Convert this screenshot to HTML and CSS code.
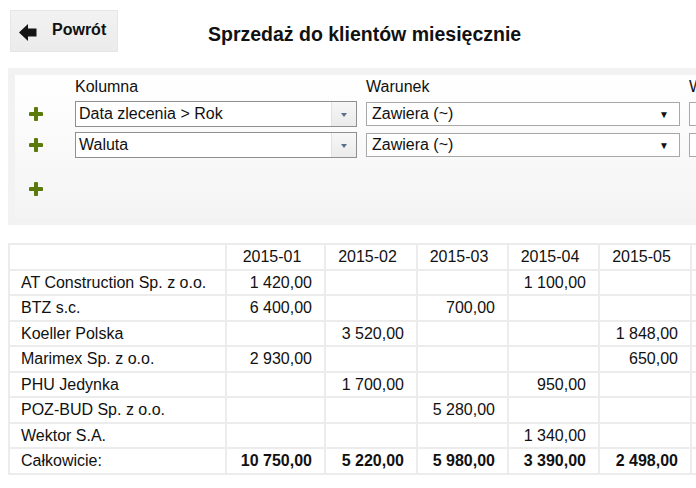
FILE: index.html
```html
<!DOCTYPE html>
<html lang="pl">
<head>
<meta charset="utf-8">
<title>Sprzedaż do klientów miesięcznie</title>
<link rel="stylesheet" href="styles.css">
</head>
<body>
<header class="top">
  <button class="back">
    <svg class="back-icon" width="18" height="17" viewBox="0 0 18 17"><polygon points="0,8.5 9,0 9,4.5 17.5,4.5 17.5,12.5 9,12.5 9,17" fill="#141414"/></svg>
    <span>Powrót</span>
  </button>
  <h1 class="title">Sprzedaż do klientów miesięcznie</h1>
</header>

<section class="panel">
  <div class="filters">
    <div class="plus-cell"></div>
    <div class="label">Kolumna</div>
    <div class="label">Warunek</div>
    <div class="label">Wartość</div>

    <div class="plus-cell"><svg class="plus" width="14" height="14" viewBox="0 0 14 14"><path d="M7 1.5v11M1.5 7h11" stroke="#5b7a0c" stroke-width="4" stroke-linecap="round"/></svg></div>
    <div class="combo"><span class="combo-text">Data zlecenia &gt; Rok</span><span class="combo-btn"><span class="tri"></span></span></div>
    <div class="select"><span>Zawiera (~)</span><span class="arrow">▼</span></div>
    <div class="input"></div>

    <div class="plus-cell"><svg class="plus" width="14" height="14" viewBox="0 0 14 14"><path d="M7 1.5v11M1.5 7h11" stroke="#5b7a0c" stroke-width="4" stroke-linecap="round"/></svg></div>
    <div class="combo"><span class="combo-text">Waluta</span><span class="combo-btn"><span class="tri"></span></span></div>
    <div class="select"><span>Zawiera (~)</span><span class="arrow">▼</span></div>
    <div class="input"></div>

    <div class="plus-cell"><svg class="plus" width="14" height="14" viewBox="0 0 14 14"><path d="M7 1.5v11M1.5 7h11" stroke="#5b7a0c" stroke-width="4" stroke-linecap="round"/></svg></div>
  </div>
</section>

<table class="report">
  <colgroup>
    <col class="c-name"><col class="c1"><col class="c2"><col class="c3"><col class="c4"><col class="c5"><col class="c6">
  </colgroup>
  <thead>
    <tr><th></th><th>2015-01</th><th>2015-02</th><th>2015-03</th><th>2015-04</th><th>2015-05</th><th>2015-06</th></tr>
  </thead>
  <tbody>
    <tr><td>AT Construction Sp. z o.o.</td><td>1 420,00</td><td></td><td></td><td>1 100,00</td><td></td><td></td></tr>
    <tr><td>BTZ s.c.</td><td>6 400,00</td><td></td><td>700,00</td><td></td><td></td><td></td></tr>
    <tr><td>Koeller Polska</td><td></td><td>3 520,00</td><td></td><td></td><td>1 848,00</td><td></td></tr>
    <tr><td>Marimex Sp. z o.o.</td><td>2 930,00</td><td></td><td></td><td></td><td>650,00</td><td></td></tr>
    <tr><td>PHU Jedynka</td><td></td><td>1 700,00</td><td></td><td>950,00</td><td></td><td></td></tr>
    <tr><td>POZ-BUD Sp. z o.o.</td><td></td><td></td><td>5 280,00</td><td></td><td></td><td></td></tr>
    <tr><td>Wektor S.A.</td><td></td><td></td><td></td><td>1 340,00</td><td></td><td></td></tr>
    <tr class="total"><td>Całkowicie:</td><td>10 750,00</td><td>5 220,00</td><td>5 980,00</td><td>3 390,00</td><td>2 498,00</td><td></td></tr>
  </tbody>
</table>
</body>
</html>
```

FILE: styles.css
```css
html {
  overflow: hidden;
}
body {
  margin: 0;
  width: 900px;
  font-family: "Liberation Sans", Arial, sans-serif;
  font-size: 16px;
  color: #111;
  background: #fff;
}

.top {
  display: flex;
  align-items: center;
  padding: 10px 0 0 10px;
  height: 42px;
}
.back {
  display: flex;
  align-items: center;
  width: 108px;
  height: 42px;
  padding: 0 0 0 8px;
  margin: 0;
  border: 1px solid #e6e6e6;
  background: linear-gradient(#f2f2f2, #ebebeb);
  font-family: "Liberation Sans", Arial, sans-serif;
  font-weight: bold;
  font-size: 16px;
  color: #111;
  cursor: pointer;
}
.back-icon {
  margin-right: 15px;
  position: relative;
  top: 1px;
}
.back span {
  position: relative;
  top: -1px;
}
.title {
  margin: 0 0 0 90px;
  font-size: 19.5px;
  font-weight: bold;
  color: #111;
  position: relative;
  top: 3px;
}

.panel {
  margin: 16px 0 0 8px;
  border: 7px solid #f2f2f2;
  background: linear-gradient(#ffffff, #f4f4f4);
  height: 143px;
}
.filters {
  display: grid;
  grid-template-columns: 51px 282px 314px 200px;
  grid-template-rows: 21px 26px 26px 52px;
  column-gap: 9px;
  row-gap: 5px;
}
.plus-cell {
  display: flex;
  align-items: center;
  justify-content: flex-start;
  padding-left: 14px;
}
.plus {
  display: block;
}
.label {
  line-height: 20px;
  padding-top: 2px;
}

.combo {
  display: flex;
  border: 1px solid #8f8f8f;
  background: #fff;
  height: 26px;
  box-sizing: border-box;
}
.combo-text {
  flex: 1;
  line-height: 24px;
  padding-left: 3px;
}
.combo-btn {
  width: 24px;
  background: linear-gradient(#f7f7f7, #ebebeb);
  border-left: 1px solid #e2e2e2;
  display: flex;
  align-items: center;
  justify-content: center;
}
.tri {
  width: 0;
  height: 0;
  border-left: 3px solid transparent;
  border-right: 3px solid transparent;
  border-top: 4px solid #58708c;
  margin-top: 1px;
}

.select {
  display: flex;
  align-items: center;
  justify-content: space-between;
  align-self: center;
  height: 24px;
  box-sizing: border-box;
  border: 1px solid #a8a8a8;
  background: #fff;
  padding: 0 10px 0 5px;
}
.arrow {
  font-size: 10px;
  color: #111;
}
.input {
  align-self: center;
  height: 24px;
  box-sizing: border-box;
  border: 1px solid #a8a8a8;
  background: #fff;
}

.report {
  margin: 18px 0 0 8px;
  border-collapse: collapse;
  table-layout: fixed;
  width: 774px;
}
.c-name { width: 217px; }
.c1 { width: 99px; }
.c2 { width: 92px; }
.c3 { width: 91px; }
.c4 { width: 91px; }
.c5 { width: 92px; }
.c6 { width: 92px; }
.report th,
.report td {
  border: 2px solid #ececec;
  padding: 2px 12px 2.5px 11px;
  line-height: 19px;
  font-size: 16px;
  color: #111;
  white-space: nowrap;
}
.report th {
  font-weight: normal;
  text-align: center;
  padding-right: 18px;
}
.report td {
  text-align: right;
}
.report td:first-child {
  text-align: left;
}
.total td {
  font-weight: bold;
}
.total td:first-child {
  font-weight: normal;
}
```
